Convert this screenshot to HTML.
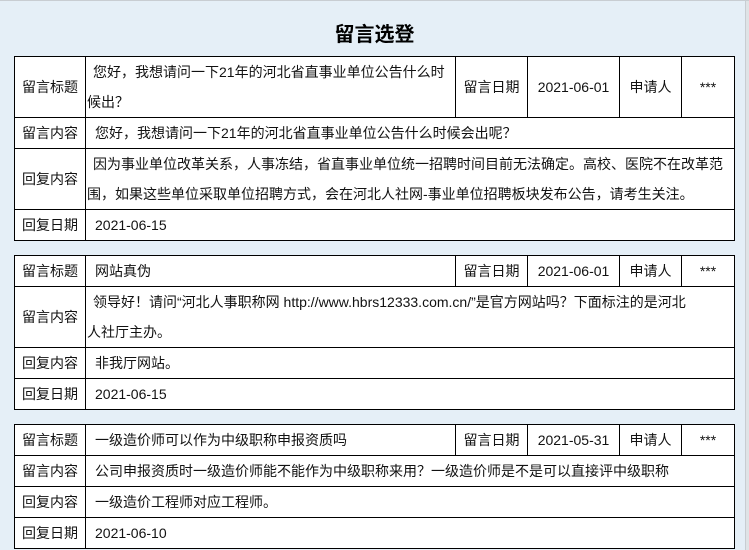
<!DOCTYPE html>
<html><head><meta charset="utf-8"><style>
html,body{margin:0;padding:0}
body{width:749px;height:549px;overflow:hidden;background:#e5eff7;font-family:"Liberation Sans","Noto Sans CJK SC",sans-serif;font-size:14px;color:#111;position:relative;border-top:1px solid #c8cdd2;box-sizing:border-box}
.rb{position:absolute;right:0;top:0;width:3px;height:549px;background:#dfe3e6;border-left:1px solid #c8cdd2}
h1{position:absolute;top:20px;left:0;width:749px;text-align:center;font-size:20px;font-weight:bold;margin:0;line-height:28px;color:#000}
table{position:absolute;left:14px;width:720px;border-collapse:collapse;table-layout:fixed;background:#fff}
td{border:1px solid #000;padding:0 3px;line-height:30px;vertical-align:middle}
td.l{text-align:center;padding:0}
td.c{text-indent:6px}
td.cc{text-align:center;padding:0}
</style></head><body>
<div class="rb"></div>
<h1>留言选登</h1>
<table style="top:55px">
<colgroup><col style="width:71px"><col style="width:370px"><col style="width:72px"><col style="width:92px"><col style="width:62px"><col style="width:53px"></colgroup>
<tr><td class="l">留言标题</td><td class="c" style="padding-left:1px">您好，我想请问一下21年的河北省直事业单位公告什么时候出？</td><td class="l">留言日期</td><td class="cc">2021-06-01</td><td class="cc">申请人</td><td class="cc">***</td></tr>
<tr><td class="l">留言内容</td><td class="c" colspan="5">您好，我想请问一下21年的河北省直事业单位公告什么时候会出呢？</td></tr>
<tr><td class="l">回复内容</td><td class="c" colspan="5" style="padding-left:1px">因为事业单位改革关系，人事冻结，省直事业单位统一招聘时间目前无法确定。高校、医院不在改革范围，如果这些单位采取单位招聘方式，会在河北人社网-事业单位招聘板块发布公告，请考生关注。</td></tr>
<tr><td class="l">回复日期</td><td class="c" colspan="5">2021-06-15</td></tr>
</table>
<table style="top:254px">
<colgroup><col style="width:71px"><col style="width:370px"><col style="width:72px"><col style="width:92px"><col style="width:62px"><col style="width:53px"></colgroup>
<tr><td class="l">留言标题</td><td class="c">网站真伪</td><td class="l">留言日期</td><td class="cc">2021-06-01</td><td class="cc">申请人</td><td class="cc">***</td></tr>
<tr><td class="l">留言内容</td><td class="c" colspan="5" style="padding-left:1px">领导好！请问“河北人事职称网 http://www.hbrs12333.com.cn/”是官方网站吗？下面标注的是河北<br>人社厅主办。</td></tr>
<tr><td class="l">回复内容</td><td class="c" colspan="5">非我厅网站。</td></tr>
<tr><td class="l">回复日期</td><td class="c" colspan="5">2021-06-15</td></tr>
</table>
<table style="top:423px">
<colgroup><col style="width:71px"><col style="width:370px"><col style="width:72px"><col style="width:92px"><col style="width:62px"><col style="width:53px"></colgroup>
<tr><td class="l">留言标题</td><td class="c">一级造价师可以作为中级职称申报资质吗</td><td class="l">留言日期</td><td class="cc">2021-05-31</td><td class="cc">申请人</td><td class="cc">***</td></tr>
<tr><td class="l">留言内容</td><td class="c" colspan="5">公司申报资质时一级造价师能不能作为中级职称来用？一级造价师是不是可以直接评中级职称</td></tr>
<tr><td class="l">回复内容</td><td class="c" colspan="5">一级造价工程师对应工程师。</td></tr>
<tr><td class="l">回复日期</td><td class="c" colspan="5">2021-06-10</td></tr>
</table>
</body></html>
